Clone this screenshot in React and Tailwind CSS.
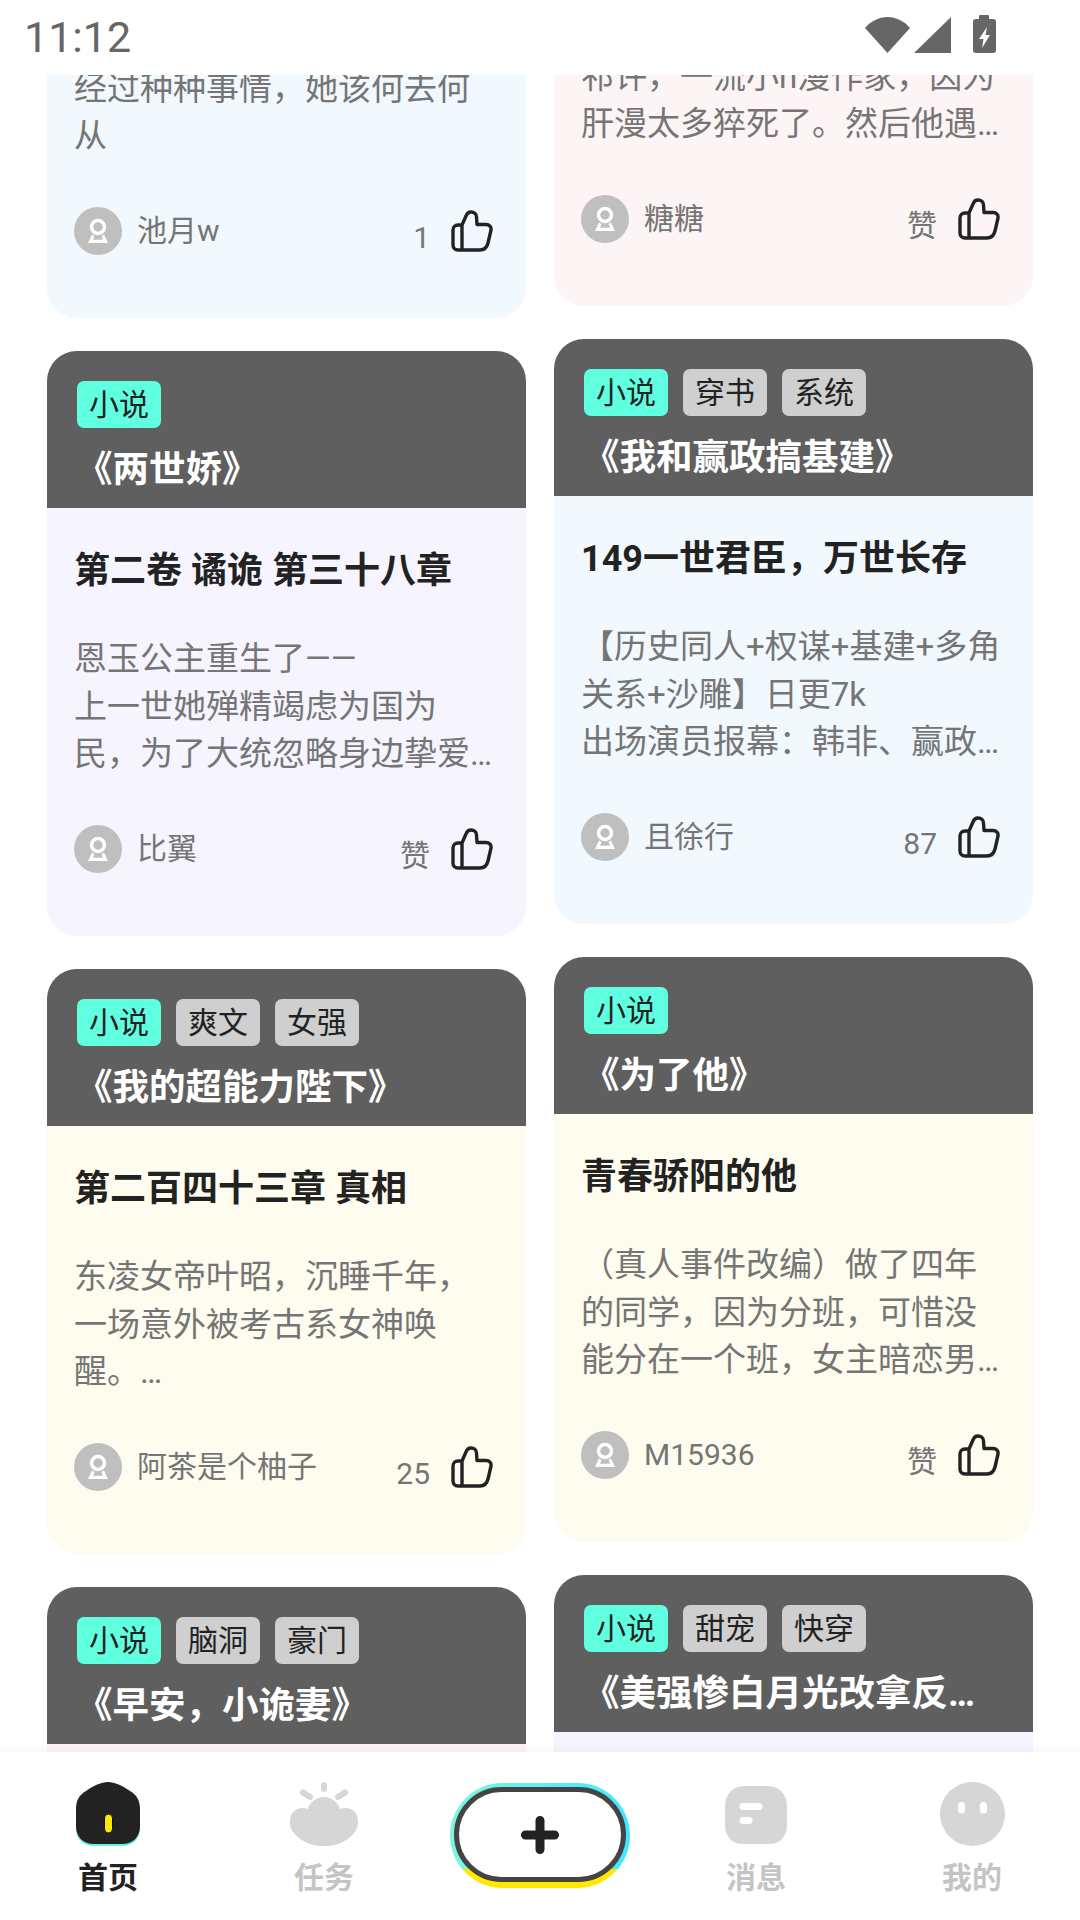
import React from "react";

const leftCards = [
  {
    bg: "bg-[#f1f8fe]",
    text: "\n经过种种事情，她该何去何\n从",
    author: "池月w",
    count: "1",
  },
  {
    bg: "bg-[#f6f5ff]",
    tags: [],
    title: "《两世娇》",
    chapter: "第二卷 谲诡 第三十八章",
    text: "恩玉公主重生了——\n上一世她殚精竭虑为国为\n民，为了大统忽略身边挚爱…",
    author: "比翼",
    count: "赞",
  },
  {
    bg: "bg-[#fefcee]",
    tags: ["爽文", "女强"],
    title: "《我的超能力陛下》",
    chapter: "第二百四十三章 真相",
    text: "东凌女帝叶昭，沉睡千年，\n一场意外被考古系女神唤\n醒。…",
    author: "阿茶是个柚子",
    count: "25",
  },
  {
    bg: "bg-[#fdf4f5]",
    tags: ["脑洞", "豪门"],
    title: "《早安，小诡妻》",
  },
];

const rightCards = [
  {
    bg: "bg-[#fdf4f5]",
    text: "\n祁许，一流小n漫作家，因为\n肝漫太多猝死了。然后他遇…",
    author: "糖糖",
    count: "赞",
  },
  {
    bg: "bg-[#f1f8fe]",
    tags: ["穿书", "系统"],
    title: "《我和赢政搞基建》",
    chapter: "149一世君臣，万世长存",
    text: "【历史同人+权谋+基建+多角\n关系+沙雕】日更7k\n出场演员报幕：韩非、赢政…",
    author: "且徐行",
    count: "87",
  },
  {
    bg: "bg-[#fefcee]",
    tags: [],
    title: "《为了他》",
    chapter: "青春骄阳的他",
    text: "（真人事件改编）做了四年\n的同学，因为分班，可惜没\n能分在一个班，女主暗恋男…",
    author: "M15936",
    count: "赞",
  },
  {
    bg: "bg-[#f6f5ff]",
    tags: ["甜宠", "快穿"],
    title: "《美强惨白月光改拿反派剧本》",
  },
];

function Avatar() {
  return (
    <svg width="48" height="48" viewBox="0 0 48 48" className="shrink-0">
      <circle cx="24" cy="24" r="24" fill="#bfbfbf" />
      <circle cx="24" cy="20" r="6.5" fill="none" stroke="#fff" strokeWidth="3.5" />
      <path d="M18 27.5 L14 36 H34 L30 27.5 L27.5 29 L29 32.8 H19 L20.5 29 Z" fill="#fff" />
    </svg>
  );
}

function Thumb() {
  return (
    <svg width="42" height="42" viewBox="0 0 42 42" fill="none" stroke="#222" strokeWidth="3.4" strokeLinejoin="round" className="shrink-0">
      <path d="M11 15 L15 6 C16 3 18 2 20 2 C23 2 25.5 4 25.5 7 L26 14.5 H35 C38.5 14.5 40.5 17 40 20 L37 33 C36 37 33 40 29 40 H7 C4 40 2 38 2 35 V20 C2 17 4 15 7 15 Z M11 15 V40" />
    </svg>
  );
}

function Tag({ label, accent }) {
  return (
    <span className={`h-[47px] px-3 flex items-center rounded-[7px] text-[30px] text-[#222] ${accent ? "bg-[#5fffe0]" : "bg-[#cfcfcf]"}`}>
      {label}
    </span>
  );
}

function Card({ card }) {
  return (
    <div className={`h-[585px] shrink-0 rounded-[30px] overflow-hidden flex flex-col ${card.bg}`}>
      <div className="h-[157px] shrink-0 bg-[#5f5f5f] pt-[30px] pl-[29px] pr-[30px]">
        <div className="flex gap-[15px] ml-[1px]">
          <Tag label="小说" accent />
          {card.tags?.map((t) => <Tag key={t} label={t} />)}
        </div>
        <h3 className="mt-[18px] text-[36.5px] leading-[48px] font-bold text-white truncate">{card.title}</h3>
      </div>
      <div className="px-[27px]">
        <h4 className="pt-[39px] h-[86px] text-[36px] leading-[48px] font-bold text-[#222]">{card.chapter}</h4>
        <p className="mt-[41px] h-[143px] text-[33px] leading-[47.5px] text-[#757575] whitespace-pre-line overflow-hidden">{card.text}</p>
      </div>
      {card.author && (
        <div className="mt-[41px] pl-[27px] pr-[33px] flex items-center">
          <Avatar />
          <span className="ml-[15px] text-[30px] text-[#757575] flex-1">{card.author}</span>
          <span className="mt-[14px] mr-[21px] text-[30px] text-[#757575]">{card.count}</span>
          <Thumb />
        </div>
      )}
    </div>
  );
}

function NavItem({ icon, label, active }) {
  return (
    <div className="flex-1 flex flex-col items-center pt-[30px]">
      <div className="h-[66px] flex items-start">{icon}</div>
      <span className={`mt-[10px] text-[30px] leading-[40px] font-bold ${active ? "text-[#222]" : "text-[#c4c4c4]"}`}>{label}</span>
    </div>
  );
}

const HOME_PATH = "M32 0 C39 0 46 3.5 54 9 C61 13 64 19 64 27 V44 C64 55 57 62 46 62 H18 C7 62 0 55 0 44 V27 C0 19 3 13 10 9 C18 3.5 25 0 32 0 Z";

export default function App() {
  return (
    <div className="w-[1080px] h-[1920px] flex flex-col overflow-hidden bg-white font-['Roboto','Noto_Sans_CJK_SC',sans-serif]">
      {/* status bar */}
      <div className="h-[75px] shrink-0 flex items-start pl-[24px] pr-[84px] justify-between">
        <span className="mt-[12px] text-[43px] leading-[50px] text-[#666]">11:12</span>
        <svg width="131" height="40" viewBox="0 0 131 40" className="mt-[15px]" fill="#666">
          <path d="M0 13 C6 6 14 2 22.5 2 C31 2 39 6 45 13 L22.5 38 Z" />
          <path d="M49 38 L86 2 V38 Z" />
          <rect x="114" y="0" width="10" height="6" rx="1" />
          <rect x="108" y="4" width="23" height="34" rx="3" />
          <path d="M122 12 L114 24 H118.5 L117 33 L125 20 H120.5 Z" fill="#fff" />
        </svg>
      </div>

      {/* scrolled feed */}
      <div className="flex-1 min-h-0 overflow-hidden flex gap-[28px] px-[47px]">
        <div className="w-[479px] mt-[-342px] flex flex-col gap-[33px]">
          {leftCards.map((c, i) => <Card key={i} card={c} />)}
        </div>
        <div className="w-[479px] mt-[-354px] flex flex-col gap-[33px]">
          {rightCards.map((c, i) => <Card key={i} card={c} />)}
        </div>
      </div>

      {/* bottom nav */}
      <div className="relative h-[168px] shrink-0 bg-white flex shadow-[0_-4px_10px_rgba(0,0,0,0.035)]">
        <NavItem
          active
          label="首页"
          icon={
            <svg width="64" height="65" viewBox="0 0 64 65">
              <path d={HOME_PATH} fill="#5ff5f0" transform="translate(0 2)" />
              <path d={HOME_PATH} fill="#222" />
              <rect x="28.5" y="32" width="8" height="19" rx="4" fill="#ffe900" stroke="#111" strokeWidth="1" />
            </svg>
          }
        />
        <NavItem
          label="任务"
          icon={
            <svg width="68" height="64" viewBox="0 0 68 64" fill="#d6d6d6">
              <rect x="31" y="0" width="6" height="10" rx="3" />
              <path d="M13 10.5 L20 15 M55 10.5 L48 15" stroke="#d6d6d6" strokeWidth="6" strokeLinecap="round" />
              <path d="M34 15 C42 15 48 20 50 27 C54 25 60 26 64 29 C67 32 68 35 68 41 C68 47 64 52 58 57 C52 61 44 64 37 64 H31 C24 64 16 61 10 57 C4 52 0 47 0 41 C0 35 1 32 4 29 C8 26 14 25 18 27 C20 20 26 15 34 15 Z" />
            </svg>
          }
        />
        <div className="flex-1 flex justify-center pt-[31px]">
          <div className="w-[180px] h-[105px] rounded-full pt-[4px] pb-[6px] px-[4px] bg-[linear-gradient(to_bottom,transparent_82%,#ffe900_82%),linear-gradient(to_right,#7ff5e0,#40e8ff)]">
            <div className="w-full h-full rounded-full bg-white border-[5px] border-[#444] flex items-center justify-center">
              <svg width="38" height="38" viewBox="0 0 38 38" stroke="#222" strokeWidth="9" strokeLinecap="round">
                <path d="M19 4.5 V33.5 M4.5 19 H33.5" />
              </svg>
            </div>
          </div>
        </div>
        <NavItem
          label="消息"
          icon={
            <svg width="62" height="64" viewBox="0 0 62 64" className="mt-[4px]">
              <path d="M20 0 H42 C54 0 62 8 62 20 V40 C62 50 55 58 45 58 H17 C7 58 0 50 0 40 V20 C0 8 8 0 20 0 Z" fill="#d6d6d6" />
              <rect x="14.5" y="17" width="23" height="7" rx="3.5" fill="#fff" />
              <rect x="14.5" y="31" width="13" height="7" rx="3.5" fill="#fff" />
            </svg>
          }
        />
        <NavItem
          label="我的"
          icon={
            <svg width="65" height="64" viewBox="0 0 65 64">
              <ellipse cx="32.5" cy="32" rx="32.5" ry="32" fill="#d6d6d6" />
              <rect x="18" y="20" width="7" height="11.5" rx="3.5" fill="#fff" />
              <rect x="40" y="20" width="7" height="11.5" rx="3.5" fill="#fff" />
            </svg>
          }
        />
      </div>
    </div>
  );
}
